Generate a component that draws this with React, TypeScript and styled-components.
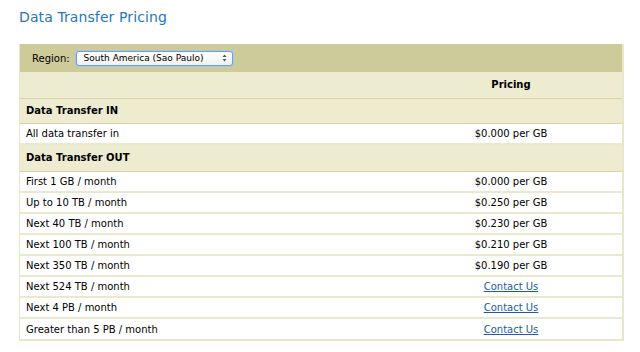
import React from 'react';
import styled, { createGlobalStyle } from 'styled-components';

const GlobalStyle = createGlobalStyle`
  html, body {
    margin: 0;
    padding: 0;
    background: #ffffff;
    font-family: "DejaVu Sans", Verdana, sans-serif;
    color: #000;
  }
`;

interface Tier {
  label: string;
  price?: string;
}

const transferIn: Tier[] = [{ label: 'All data transfer in', price: '$0.000 per GB' }];

const transferOut: Tier[] = [
  { label: 'First 1 GB / month', price: '$0.000 per GB' },
  { label: 'Up to 10 TB / month', price: '$0.250 per GB' },
  { label: 'Next 40 TB / month', price: '$0.230 per GB' },
  { label: 'Next 100 TB / month', price: '$0.210 per GB' },
  { label: 'Next 350 TB / month', price: '$0.190 per GB' },
  { label: 'Next 524 TB / month' },
  { label: 'Next 4 PB / month' },
  { label: 'Greater than 5 PB / month' },
];

const Page = styled.div`
  padding: 7px 15px 0 19px;
  width: 606px;
`;

const Title = styled.h2`
  margin: 0 0 17px 0;
  font-size: 14px;
  font-weight: normal;
  line-height: 20px;
  color: #2677bb;
  letter-spacing: 0.1px;
`;

const Frame = styled.div`
  border: 2px solid #e9e7c8;
  border-top: none;
  border-left-width: 1px;
  width: 605px;
  box-sizing: border-box;
`;

const RegionBar = styled.div`
  display: flex;
  align-items: center;
  height: 28px;
  padding-left: 12px;
  background: #cecb9b;
  font-size: 10px;
  gap: 6px;
`;

const SelectBox = styled.div`
  display: flex;
  align-items: center;
  justify-content: space-between;
  width: 157px;
  height: 15px;
  padding: 0 5px 0 7px;
  box-sizing: border-box;
  background: linear-gradient(#ffffff, #f1f1f1);
  border: 1px solid #6f9fd6;
  border-radius: 3px;
  box-shadow: 0 0 0 1px #a9c6e8;
  font-size: 9px;
  line-height: 12px;
  white-space: nowrap;
`;

const Table = styled.table`
  width: 100%;
  border-collapse: collapse;
  font-size: 10px;
`;

const HeadRow = styled.tr<{ height: number }>`
  background: #eeecd0;
  height: ${(p) => p.height}px;
  border-bottom: 1px solid #d7d5a9;
`;

const BodyRow = styled.tr`
  background: #ffffff;
  height: 21px;
  border-bottom: 2px solid #ebe9cc;
  &:last-child {
    border-bottom: none;
  }
`;

const Cell = styled.td<{ center?: boolean; bold?: boolean }>`
  padding: 0 0 0 6px;
  text-align: ${(p) => (p.center ? 'center' : 'left')};
  font-weight: ${(p) => (p.bold ? 'bold' : 'normal')};
  vertical-align: middle;
`;

const PriceCell = styled(Cell)`
  width: 222px;
  padding: 0;
`;

const Link = styled.a`
  color: #1d5aa8;
  text-decoration: underline;
  cursor: pointer;
`;

function Arrows(): React.ReactElement {
  return (
    <svg width="5" height="8" viewBox="0 0 5 8">
      <path d="M0.5 3 L2.5 0.5 L4.5 3 Z M0.5 5 L2.5 7.5 L4.5 5 Z" fill="#555" />
    </svg>
  );
}

function TierRows({ tiers }: { tiers: Tier[] }): React.ReactElement {
  return (
    <>
      {tiers.map((t) => (
        <BodyRow key={t.label}>
          <Cell>{t.label}</Cell>
          <PriceCell center>{t.price ? t.price : <Link>Contact Us</Link>}</PriceCell>
        </BodyRow>
      ))}
    </>
  );
}

export default function App(): React.ReactElement {
  return (
    <Page>
      <GlobalStyle />
      <Title>Data Transfer Pricing</Title>
      <Frame>
        <RegionBar>
          <span>Region:</span>
          <SelectBox>
            <span>South America (Sao Paulo)</span>
            <Arrows />
          </SelectBox>
        </RegionBar>
        <Table>
          <tbody>
            <HeadRow height={26}>
              <Cell />
              <PriceCell center bold>
                Pricing
              </PriceCell>
            </HeadRow>
            <HeadRow height={25}>
              <Cell bold>Data Transfer IN</Cell>
              <PriceCell />
            </HeadRow>
            <TierRows tiers={transferIn} />
            <HeadRow height={27}>
              <Cell bold>Data Transfer OUT</Cell>
              <PriceCell />
            </HeadRow>
            <TierRows tiers={transferOut} />
          </tbody>
        </Table>
      </Frame>
    </Page>
  );
}
